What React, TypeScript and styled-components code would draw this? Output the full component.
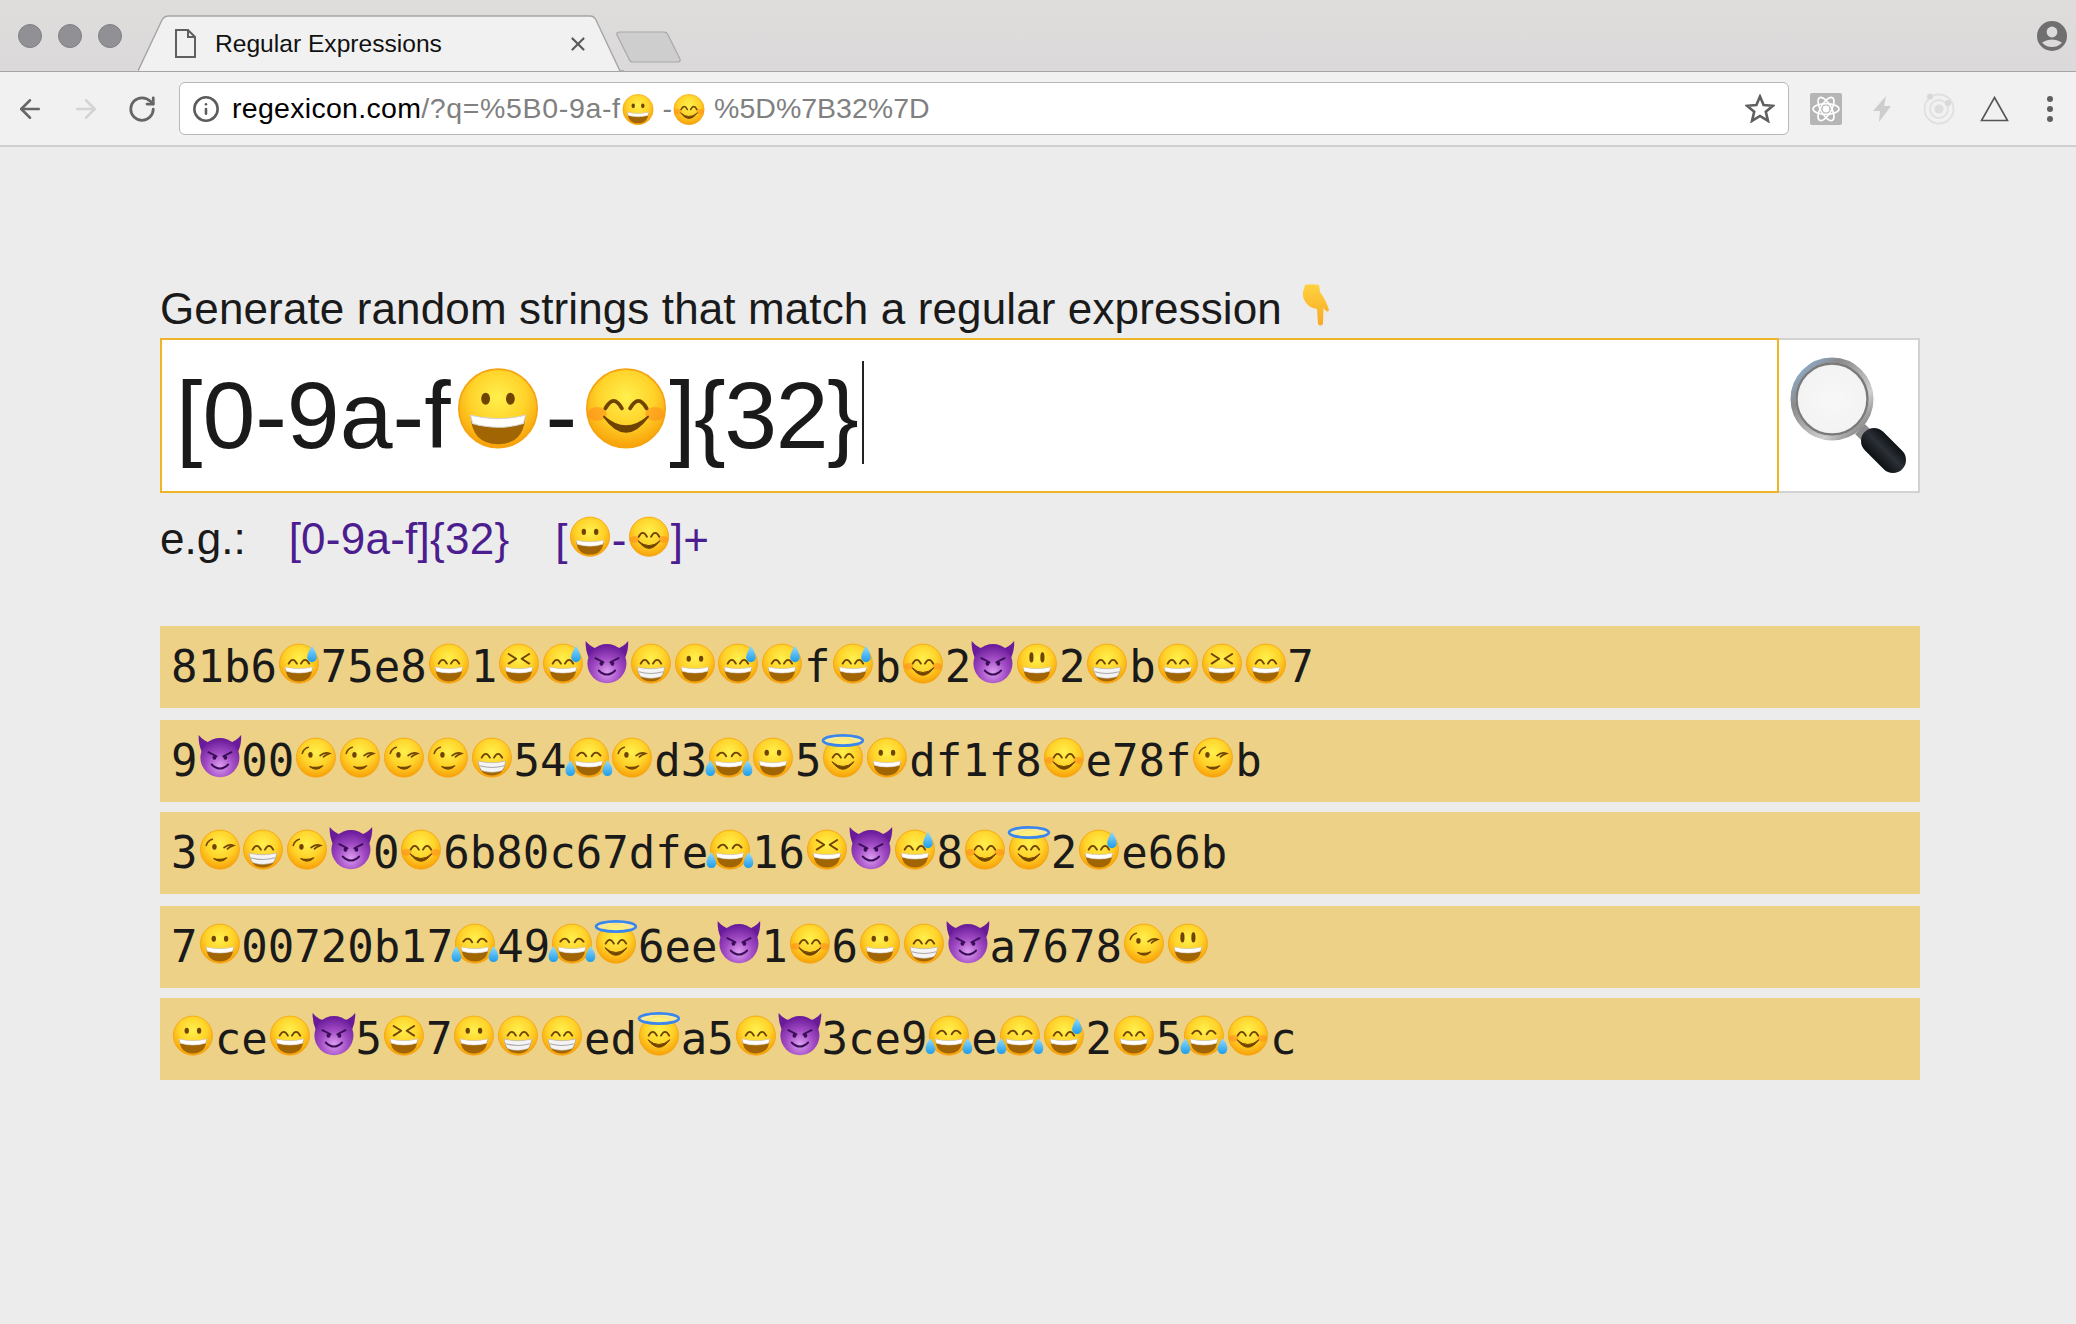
import { ReactNode } from 'react';
import styled, { createGlobalStyle } from 'styled-components';
import { ArrowLeft, ArrowRight, Info, RotateCw, X } from 'lucide-react';

const GlobalStyle = createGlobalStyle`
  html, body {
    margin: 0;
    padding: 0;
    background: #ececec;
  }
  body {
    font-family: "Liberation Sans", Arial, sans-serif;
    color: #1a1a1a;
  }
`;

const Page = styled.div`
  width: 2076px;
  height: 1324px;
  overflow: hidden;
  background: #ececec;
`;

/* ---------- browser chrome ---------- */

const TabStrip = styled.div`
  height: 71px;
  display: flex;
  align-items: center;
  padding-left: 18px;
  background: linear-gradient(#dfdcdc, #dbd9d9);
  border-bottom: 1px solid #a5a5a5;
`;

const Lights = styled.div`
  display: flex;
  gap: 16px;
  margin-right: 16px;
`;

const Light = styled.span`
  width: 24px;
  height: 24px;
  box-sizing: border-box;
  border-radius: 50%;
  background: #919094;
  border: 1px solid #807f83;
`;

const Tab = styled.div`
  position: relative;
  align-self: flex-end;
  width: 486px;
  height: 57px;
  margin-bottom: -1px;
  padding: 0 35px 0 37px;
  box-sizing: border-box;
  display: flex;
  align-items: center;
  gap: 19px;
  font-size: 24.6px;
  color: #111;
`;

const TabShape = styled.svg`
  position: absolute;
  left: 0;
  top: 0;
`;

const TabIcon = styled.svg`
  position: relative;
  flex: none;
`;

const TabTitle = styled.span`
  position: relative;
  flex: 1;
`;

const TabClose = styled(X)`
  position: relative;
  color: #5a5a5a;
`;

const NewTab = styled.svg`
  align-self: flex-end;
  margin: 0 0 8px -8px;
`;

const Avatar = styled.svg`
  margin-left: auto;
  margin-right: 9px;
`;

const Toolbar = styled.div`
  height: 73px;
  display: flex;
  align-items: center;
  padding-left: 15px;
  background: #f1f1f1;
  border-bottom: 2px solid #cfcfcf;
`;

const NavButton = styled.span<{ $off?: boolean }>`
  display: flex;
  width: 30px;
  margin-right: 26px;
  color: ${(p) => (p.$off ? '#d4d4d4' : '#666')};
  &:nth-child(3) {
    margin-right: 22px;
  }
`;

const AddressBar = styled.div`
  width: 1610px;
  height: 53px;
  box-sizing: border-box;
  display: flex;
  align-items: center;
  padding: 0 13px 0 12px;
  background: #fff;
  border: 1.5px solid #b7b7b7;
  border-radius: 6px;
`;

const InfoIcon = styled(Info)`
  color: #5c5c5c;
  margin-right: 12px;
  flex: none;
`;

const Url = styled.div`
  flex: 1;
  font-size: 28.5px;
  color: #808080;
  white-space: nowrap;
  display: flex;
  align-items: center;
`;

const UrlHost = styled.span`
  color: #000;
  letter-spacing: 0.3px;
`;

const UrlPath = styled.span`
  letter-spacing: 0.65px;
`;

const UrlGap = styled.span`
  margin-left: 8px;
`;

const Extensions = styled.div`
  flex: 1;
  display: flex;
  align-items: center;
  padding-left: 21px;
`;

const ReactBadge = styled.span`
  width: 32px;
  height: 32px;
  border-radius: 2px;
  background: #b5b5b5;
  display: flex;
  align-items: center;
  justify-content: center;
  margin-right: 31px;
`;

const BoltIcon = styled.svg`
  margin-right: 32px;
`;

const RingsIcon = styled.svg`
  margin-right: 25px;
`;

const TriangleIcon = styled.svg`
  margin-right: 38px;
`;

const Dots = styled.span`
  display: flex;
  flex-direction: column;
  gap: 4px;
  i {
    width: 6px;
    height: 6px;
    border-radius: 50%;
    background: #5f5f5f;
  }
`;

/* ---------- page content ---------- */

const Main = styled.main`
  width: 1760px;
  margin-left: 160px;
  padding-top: 137px;
`;

const Heading = styled.h1`
  margin: 0;
  font-size: 44px;
  font-weight: 400;
  line-height: 50px;
  letter-spacing: 0.12px;
  color: #1a1a1a;
  white-space: nowrap;
`;

const PointDown = styled.svg`
  margin-left: 20px;
  vertical-align: -3px;
`;

const SearchForm = styled.div`
  display: flex;
  height: 155px;
  margin-top: 4px;
`;

const SearchInput = styled.div`
  flex: 1;
  box-sizing: border-box;
  display: flex;
  align-items: center;
  padding: 0 0 2px 14px;
  background: #fff;
  border: 2px solid #f0b429;
  font-size: 95px;
  line-height: 100px;
  color: #1a1a1a;
  white-space: nowrap;
`;

const InputEmoji = styled.span<{ $left: number; $right: number }>`
  display: flex;
  align-items: center;
  margin: 0 ${(p) => p.$right}px 16px ${(p) => p.$left}px;
`;

const Quantifier = styled.span`
  letter-spacing: -1.5px;
`;

const Caret = styled.span`
  width: 2px;
  height: 103px;
  margin: 0 0 4px 5px;
  background: #222;
`;

const SearchButton = styled.button`
  width: 141px;
  box-sizing: border-box;
  padding: 0;
  display: flex;
  align-items: center;
  justify-content: center;
  background: #fff;
  border: 2px solid #d2d2d2;
  border-left: none;
`;

const Examples = styled.div`
  display: flex;
  gap: 46px;
  margin-top: 21px;
  font-size: 44px;
  line-height: 50px;
`;

const ExampleLabel = styled.span`
  margin-right: -3px;
`;

const Example = styled.a`
  color: #4b1d8f;
  text-decoration: none;
  white-space: nowrap;
  letter-spacing: 0.25px;
`;

const Results = styled.div`
  margin-top: 61px;
`;

const Row = styled.div`
  height: 82px;
  box-sizing: border-box;
  padding: 11px 0 0 11px;
  margin-top: 10px;
  background: #edd186;
  font-family: "DejaVu Sans Mono", "Liberation Mono", monospace;
  font-size: 44px;
  line-height: 60px;
  color: #1a1a1a;
  white-space: nowrap;
  &:first-child {
    margin-top: 0;
  }
  &:nth-child(even) {
    margin-top: 12px;
  }
`;

/* ---------- emoji drawings ---------- */

const Hidden = styled.svg`
  position: absolute;
  width: 0;
  height: 0;
`;

const EmojiSvg = styled.svg<{ $size: number }>`
  width: ${(p) => p.$size}px;
  height: ${(p) => p.$size}px;
  vertical-align: ${(p) => Math.round(p.$size * -0.06)}px;
  overflow: visible;
  flex: none;
`;

const Defs = () => (
  <Hidden aria-hidden="true">
    <defs>
      <radialGradient id="face" cx="50%" cy="36%" r="64%">
        <stop offset="0%" stopColor="#fff04d" />
        <stop offset="55%" stopColor="#ffd32a" />
        <stop offset="100%" stopColor="#f8a008" />
      </radialGradient>
      <radialGradient id="devil" cx="50%" cy="72%" r="70%">
        <stop offset="0%" stopColor="#dc9cf0" />
        <stop offset="50%" stopColor="#a24cc4" />
        <stop offset="100%" stopColor="#6a1b9a" />
      </radialGradient>
      <linearGradient id="drop" x1="0" y1="0" x2="0" y2="1">
        <stop offset="0%" stopColor="#8fdcff" />
        <stop offset="100%" stopColor="#1e9be8" />
      </linearGradient>
      <linearGradient id="finger" x1="0" y1="0" x2="0" y2="1">
        <stop offset="0%" stopColor="#ffd23f" />
        <stop offset="100%" stopColor="#f9a825" />
      </linearGradient>
      <radialGradient id="lens" cx="50%" cy="50%" r="50%">
        <stop offset="0%" stopColor="#f8f8f8" />
        <stop offset="85%" stopColor="#f3f3f3" />
        <stop offset="100%" stopColor="#e0e0e0" />
      </radialGradient>
      <linearGradient id="rim" x1="0" y1="0" x2="1" y2="1">
        <stop offset="0%" stopColor="#8fbbe8" />
        <stop offset="30%" stopColor="#8a8a8a" />
        <stop offset="70%" stopColor="#cfcfcf" />
        <stop offset="100%" stopColor="#5f5f5f" />
      </linearGradient>
      <linearGradient id="grip" x1="0" y1="1" x2="1" y2="0">
        <stop offset="0%" stopColor="#0c0f13" />
        <stop offset="55%" stopColor="#2b3036" />
        <stop offset="100%" stopColor="#0c0f13" />
      </linearGradient>
    </defs>
  </Hidden>
);

const BROWN = '#6f4300';

const Face = () => <circle cx="32" cy="33" r="28.5" fill="url(#face)" stroke="#f5a30f" strokeWidth="1.2" />;

const ArcEyes = () => (
  <path d="M17 33q6-11 12 0M35 33q6-11 12 0" fill="none" stroke={BROWN} strokeWidth="2.8" strokeLinecap="round" />
);

const OpenMouth = () => (
  <>
    <path d="M12 38q20 5 40 0q-1 21-20 21t-20-21z" fill="#a26503" />
    <path d="M12 38q20 5 40 0l-1.5 6q-18.5 5.5-37 0z" fill="#fff" stroke="#d5d5d5" strokeWidth=".8" />
  </>
);

const TeethMouth = () => (
  <>
    <path d="M12 38q20 5 40 0q-1 21-20 21t-20-21z" fill="#a26503" />
    <path d="M12 38q20 5 40 0q-1 9-5 14q-15 5-30 0q-4-5-5-14z" fill="#f4f4f4" stroke="#bdbdbd" strokeWidth=".8" />
    <path d="M14 45q18 5 36 0" fill="none" stroke="#a8a8a8" strokeWidth="1.6" />
  </>
);

const SmileLine = () => (
  <path d="M16 39q16 22 32 0q-16 14-32 0z" fill={BROWN} stroke={BROWN} strokeWidth="1.4" strokeLinejoin="round" />
);

const Tears = () => (
  <>
    <path d="M5 37q-8 10-7 16a7 7 0 0 0 14 0q0-6-7-16z" fill="url(#drop)" />
    <path d="M59 37q-7 10-7 16a7 7 0 0 0 14 0q1-6-7-16z" fill="url(#drop)" />
  </>
);

const Blush = () => (
  <>
    <ellipse cx="11" cy="37" rx="7" ry="5" fill="#ff8a1e" opacity=".55" />
    <ellipse cx="53" cy="37" rx="7" ry="5" fill="#ff8a1e" opacity=".55" />
  </>
);

const drawings: Record<string, ReactNode> = {
  // grinning face
  '😀': (
    <>
      <Face />
      <ellipse cx="23" cy="26" rx="3.2" ry="4.4" fill={BROWN} />
      <ellipse cx="41" cy="26" rx="3.2" ry="4.4" fill={BROWN} />
      <OpenMouth />
    </>
  ),
  // big eyes
  '😃': (
    <>
      <Face />
      <ellipse cx="24" cy="24" rx="3" ry="7.4" fill={BROWN} />
      <ellipse cx="40" cy="24" rx="3" ry="7.4" fill={BROWN} />
      <OpenMouth />
    </>
  ),
  '😄': (
    <>
      <Face />
      <ArcEyes />
      <OpenMouth />
    </>
  ),
  '😁': (
    <>
      <Face />
      <ArcEyes />
      <TeethMouth />
    </>
  ),
  '😅': (
    <>
      <Face />
      <ArcEyes />
      <OpenMouth />
      <path d="M51 7q-7 11-7 17a7 7 0 0 0 14 0q0-6-7-17z" fill="url(#drop)" />
    </>
  ),
  '😆': (
    <>
      <Face />
      <path d="M17 19l11 7l-11 7M47 19l-11 7l11 7" fill="none" stroke={BROWN} strokeWidth="2.8" strokeLinecap="round" strokeLinejoin="round" />
      <OpenMouth />
    </>
  ),
  '😂': (
    <>
      <Face />
      <path d="M15 30q7-9 13 1M36 31q6-10 13-1" fill="none" stroke={BROWN} strokeWidth="2.8" strokeLinecap="round" />
      <OpenMouth />
      <Tears />
    </>
  ),
  '😉': (
    <>
      <Face />
      <path d="M12 27q2-7 9-9" fill="none" stroke={BROWN} strokeWidth="2.2" strokeLinecap="round" />
      <ellipse cx="24" cy="29" rx="3.2" ry="4.2" fill={BROWN} />
      <path d="M38 30q7-6 14-3q-6 2-9 5" fill="none" stroke={BROWN} strokeWidth="2.4" strokeLinecap="round" />
      <path d="M23 46q10 8 19-1q-9 4-19 1z" fill={BROWN} stroke={BROWN} strokeWidth="1.6" strokeLinejoin="round" />
    </>
  ),
  '😊': (
    <>
      <Face />
      <Blush />
      <ArcEyes />
      <SmileLine />
    </>
  ),
  '😇': (
    <>
      <Face />
      <ArcEyes />
      <SmileLine />
      <ellipse cx="32" cy="8" rx="29" ry="7.5" fill="#fff6a0" fillOpacity=".7" stroke="#3b86ee" strokeWidth="4" />
    </>
  ),
  '😈': (
    <>
      <path d="M6 26Q0 12 1 0Q9 10 20 12zM58 26Q64 12 63 0Q55 10 44 12z" fill="#6a1b9a" />
      <circle cx="32" cy="33" r="28.5" fill="url(#devil)" />
      <path d="M15 25l12 6M49 25l-12 6" stroke="#3a0d57" strokeWidth="2.8" strokeLinecap="round" />
      <ellipse cx="24" cy="33" rx="2.8" ry="3.2" fill="#3a0d57" />
      <ellipse cx="40" cy="33" rx="2.8" ry="3.2" fill="#3a0d57" />
      <path d="M20 43q12 12 24 0" fill="none" stroke="#3a0d57" strokeWidth="2.8" strokeLinecap="round" />
    </>
  ),
};

const Emoji = ({ char, size = 44 }: { char: string; size?: number }) => (
  <EmojiSvg $size={size} viewBox="0 0 64 64" role="img" aria-label={char}>
    {drawings[char]}
  </EmojiSvg>
);

// text with the emoji characters swapped for their drawings
const Mixed = ({ text, size }: { text: string; size?: number }) => (
  <>
    {Array.from(text).map((ch, i) =>
      drawings[ch] ? <Emoji key={i} char={ch} size={size} /> : <span key={i}>{ch}</span>,
    )}
  </>
);

const results = [
  '81b6😅75e8😄1😆😅😈😁😀😅😅f😅b😊2😈😃2😁b😄😆😄7',
  '9😈00😉😉😉😉😁54😂😉d3😂😀5😇😀df1f8😊e78f😉b',
  '3😉😁😉😈0😊6b80c67dfe😂16😆😈😅8😊😇2😅e66b',
  '7😀00720b17😂49😂😇6ee😈1😊6😀😁😈a7678😉😃',
  '😀ce😄😈5😆7😀😁😁ed😇a5😄😈3ce9😂e😂😅2😄5😂😊c',
];

const App = () => (
  <Page>
    <GlobalStyle />
    <Defs />

    <TabStrip>
      <Lights>
        <Light />
        <Light />
        <Light />
      </Lights>
      <Tab>
        <TabShape width="486" height="57" viewBox="0 0 486 57">
          <path d="M0 56L24 5Q26 1 31 1H452Q456 1 458 5L482 56z" fill="#f1f1f1" />
          <path d="M0 56L24 5Q26 1 31 1H452Q456 1 458 5L482 56H486" fill="none" stroke="#a5a5a5" strokeWidth="1.4" />
        </TabShape>
        <TabIcon width="21" height="29" viewBox="0 0 21 29">
          <path d="M1 1h12l7 7v20H1zM13 1v7h7" fill="none" stroke="#5f5f5f" strokeWidth="2" />
        </TabIcon>
        <TabTitle>Regular Expressions</TabTitle>
        <TabClose size={22} strokeWidth={2.4} />
      </Tab>
      <NewTab width="66" height="32" viewBox="0 0 66 32">
        <path d="M1 4Q0 1 4 1H48Q51 1 52 4L64 28Q65 31 61 31H17Q14 31 13 28z" fill="#cecece" stroke="#a9a9a9" strokeWidth="1.2" />
      </NewTab>
      <Avatar width="30" height="30" viewBox="0 0 30 30">
        <circle cx="15" cy="15" r="15" fill="#6f6f6f" />
        <circle cx="15" cy="11" r="5.4" fill="#dcdada" />
        <path d="M5 21.5q10-6 20 0q-4 4.5-10 4.5t-10-4.5z" fill="#dcdada" />
      </Avatar>
    </TabStrip>

    <Toolbar>
      <NavButton>
        <ArrowLeft size={32} strokeWidth={2} />
      </NavButton>
      <NavButton $off>
        <ArrowRight size={32} strokeWidth={2} />
      </NavButton>
      <NavButton>
        <RotateCw size={32} strokeWidth={2.2} />
      </NavButton>
      <AddressBar>
        <InfoIcon size={28} strokeWidth={2.2} />
        <Url>
          <UrlHost>regexicon.com</UrlHost>
          <UrlPath>/?q=%5B0-9a-f</UrlPath>
          <Emoji char="😀" size={34} />
          <UrlGap>-</UrlGap>
          <Emoji char="😊" size={34} />
          <UrlGap>%5D%7B32%7D</UrlGap>
        </Url>
        <svg width="30" height="29" viewBox="0 0 30 29" aria-label="bookmark">
          <path d="M15 2.5l3.6 8.6 9.3.7-7.1 6 2.2 9.1-8-4.9-8 4.9 2.2-9.1-7.1-6 9.3-.7z" fill="none" stroke="#5f5f5f" strokeWidth="2.6" />
        </svg>
      </AddressBar>
      <Extensions>
        <ReactBadge>
          <svg width="28" height="28" viewBox="0 0 28 28" fill="none" stroke="#fff" strokeWidth="1.6">
            <ellipse cx="14" cy="14" rx="13" ry="5.4" />
            <ellipse cx="14" cy="14" rx="13" ry="5.4" transform="rotate(60 14 14)" />
            <ellipse cx="14" cy="14" rx="13" ry="5.4" transform="rotate(120 14 14)" />
            <circle cx="14" cy="14" r="2.6" fill="#fff" />
          </svg>
        </ReactBadge>
        <BoltIcon width="18" height="26" viewBox="0 0 18 26">
          <path d="M13 0L0 15h7L6 26l12-16h-7z" fill="#cdcdcd" />
        </BoltIcon>
        <RingsIcon width="32" height="32" viewBox="0 0 32 32" fill="none">
          <circle cx="16" cy="16" r="14.5" stroke="#e0e0e0" strokeWidth="1.8" />
          <circle cx="16" cy="16" r="9" stroke="#e0e0e0" strokeWidth="1.8" />
          <circle cx="16" cy="16" r="4.6" fill="#dedede" />
          <circle cx="7" cy="3.5" r="3" fill="#d8d8d8" />
          <circle cx="25" cy="10" r="3" fill="#d8d8d8" />
        </RingsIcon>
        <TriangleIcon width="29" height="26" viewBox="0 0 29 26">
          <path d="M14.5 1.5L27.5 24.5H1.5z" fill="none" stroke="#555" strokeWidth="1.6" />
        </TriangleIcon>
        <Dots>
          <i />
          <i />
          <i />
        </Dots>
      </Extensions>
    </Toolbar>

    <Main>
      <Heading>
        Generate random strings that match a regular expression
        <PointDown width="27" height="43" viewBox="0 0 27 43" role="img" aria-label="👇">
          <path d="M3 1Q9-.5 17 1L18 8Q24 16 27 26Q26 29 23 26L21.5 24L21 40Q18.5 43 16 40L15 25Q8 24 5 20Q0 14 1 8z" fill="url(#finger)" />
        </PointDown>
      </Heading>

      <SearchForm>
        <SearchInput>
          [0-9a-f
          <InputEmoji $left={3} $right={4}>
            <Emoji char="😀" size={88} />
          </InputEmoji>
          -
          <InputEmoji $left={5} $right={-1}>
            <Emoji char="😊" size={88} />
          </InputEmoji>
          <Quantifier>{']{32}'}</Quantifier>
          <Caret />
        </SearchInput>
        <SearchButton aria-label="search">
          <svg width="118" height="118" viewBox="0 0 118 118">
            <path d="M70 72L80 82" stroke="#8c8c8c" strokeWidth="14" />
            <path d="M84 84L103 103" stroke="url(#grip)" strokeWidth="26" strokeLinecap="round" />
            <circle cx="42" cy="42" r="39" fill="url(#lens)" stroke="url(#rim)" strokeWidth="5" />
            <circle cx="42" cy="42" r="35.5" fill="none" stroke="#7a7a7a" strokeWidth="2.4" />
          </svg>
        </SearchButton>
      </SearchForm>

      <Examples>
        <ExampleLabel>e.g.:</ExampleLabel>
        <Example href="#">[0-9a-f]{'{32}'}</Example>
        <Example href="#">
          <Mixed text="[😀-😊]+" />
        </Example>
      </Examples>

      <Results>
        {results.map((r) => (
          <Row key={r}>
            <Mixed text={r} size={43.85} />
          </Row>
        ))}
      </Results>
    </Main>
  </Page>
);

export default App;
